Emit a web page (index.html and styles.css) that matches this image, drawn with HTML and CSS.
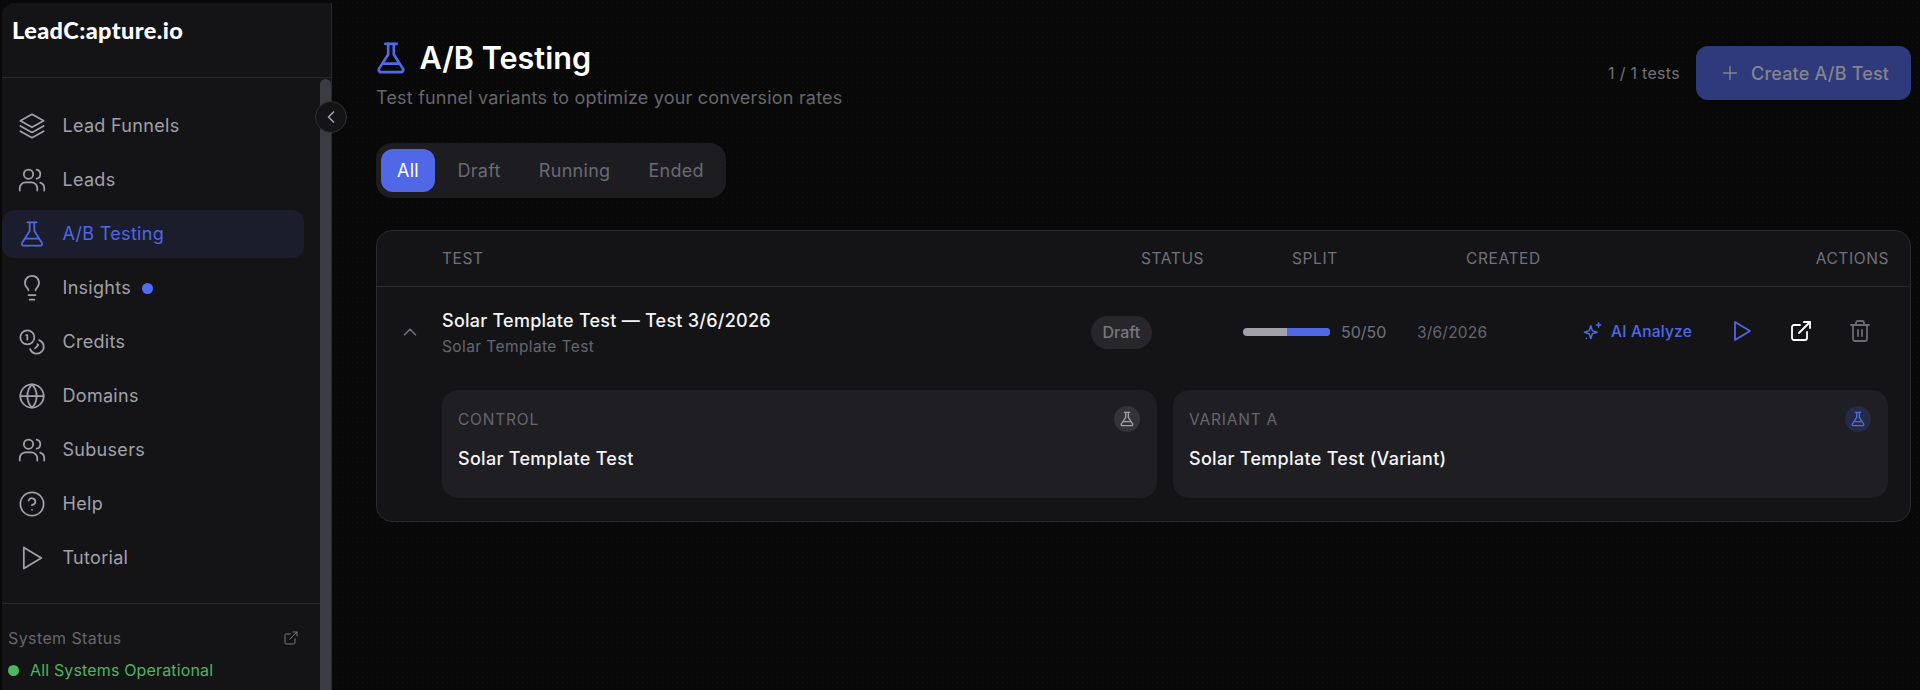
FILE: index.html
```html
<!DOCTYPE html>
<html lang="en">
  <head>
    <meta charset="UTF-8" />
    <title>A/B Testing</title>
    <link rel="stylesheet" href="styles.css">
  </head>
  <body>
    <div class="app">
      <!-- Sidebar -->
      <aside class="sidebar">
        <div class="logo"><span>LeadC:apture.io</span></div>
        <div class="side-body">
          <div class="side-main">
            <nav class="nav">
              <a class="nav-item">
                <svg class="nav-icon" viewBox="0 0 24 24"><path d="M12 2 2 7.5 12 13l10-5.5z"/><path d="m2 12 10 5.5L22 12"/><path d="m2 16.5 10 5.5 10-5.5"/></svg>
                Lead Funnels
              </a>
              <a class="nav-item">
                <svg class="nav-icon" viewBox="0 0 24 24"><circle cx="9" cy="7" r="4"/><path d="M1.5 21v-2a5 5 0 0 1 5-5h5a5 5 0 0 1 5 5v2"/><path d="M16 3.100a4 4 0 0 1 0 7.800"/><path d="M22.500 21v-2a5 5 0 0 0-3.500-4.800"/></svg>
                Leads
              </a>
              <a class="nav-item active">
                <svg class="nav-icon" viewBox="0 0 24 24"><path d="M8 2h8"/><path d="M10 2v7.500L3.600 19.500A1.600 1.600 0 0 0 5 22h14a1.600 1.600 0 0 0 1.400-2.500L14 9.500V2"/><path d="M6.500 16h11"/></svg>
                A/B Testing
              </a>
              <a class="nav-item">
                <svg class="nav-icon" viewBox="0 0 24 24"><path d="M15 14c.2-1 .7-1.700 1.500-2.500A6 6 0 1 0 6 8c0 1 .2 2.200 1.500 3.500.7.700 1.300 1.500 1.500 2.500"/><path d="M9 18h6"/><path d="M10 22h4"/></svg>
                Insights
                <span class="nav-dot"></span>
              </a>
              <a class="nav-item">
                <svg class="nav-icon" viewBox="0 0 24 24"><circle cx="8" cy="8" r="6"/><path d="M18.100 10.400a6 6 0 1 1-7.700 7.700"/><path d="M7 6h1v4"/><path d="m16.700 13.900.7.700-2.800 2.800"/></svg>
                Credits
              </a>
              <a class="nav-item">
                <svg class="nav-icon" viewBox="0 0 24 24"><circle cx="12" cy="12" r="10"/><path d="M12 2a14.500 14.500 0 0 0 0 20 14.500 14.500 0 0 0 0-20"/><path d="M2 12h20"/></svg>
                Domains
              </a>
              <a class="nav-item">
                <svg class="nav-icon" viewBox="0 0 24 24"><circle cx="9" cy="7" r="4"/><path d="M1.500 21v-2a5 5 0 0 1 5-5h5a5 5 0 0 1 5 5v2"/><path d="M16 3.100a4 4 0 0 1 0 7.800"/><path d="M22.500 21v-2a5 5 0 0 0-3.500-4.800"/></svg>
                Subusers
              </a>
              <a class="nav-item">
                <svg class="nav-icon" viewBox="0 0 24 24"><circle cx="12" cy="12" r="10"/><path d="M9.100 9a3 3 0 0 1 5.800 1c0 2-3 3-3 3"/><path d="M12 17h.01"/></svg>
                Help
              </a>
              <a class="nav-item">
                <svg class="nav-icon" viewBox="0 0 24 24"><path d="M5 3v18l15-9z"/></svg>
                Tutorial
              </a>
            </nav>
            <div class="status">
              <div class="status-top">
                <span>System Status</span>
                <svg class="status-link" viewBox="0 0 24 24"><path d="M15 3h6v6"/><path d="M10 14 21 3"/><path d="M18 13v6a2 2 0 0 1-2 2H5a2 2 0 0 1-2-2V8a2 2 0 0 1 2-2h6"/></svg>
              </div>
              <div class="status-ok"><span class="ok-dot"></span>All Systems Operational</div>
            </div>
          </div>
          <div class="scrollbar"></div>
        </div>
        <button class="collapse">
          <svg viewBox="0 0 24 24"><path d="m15 18-6-6 6-6"/></svg>
        </button>
      </aside>

      <!-- Main content -->
      <main class="main">
        <header class="page-head">
          <div>
            <h1 class="page-title">
              <svg class="title-icon" viewBox="0 0 24 24"><path d="M8 2h8"/><path d="M10 2v7.500L3.600 19.500A1.600 1.600 0 0 0 5 22h14a1.600 1.600 0 0 0 1.400-2.500L14 9.500V2"/><path d="M6.500 16h11"/></svg>
              A/B Testing
            </h1>
            <p class="page-sub">Test funnel variants to optimize your conversion rates</p>
          </div>
          <div class="head-right">
            <span class="count">1 / 1 tests</span>
            <button class="create-btn">
              <svg viewBox="0 0 24 24"><path d="M5 12h14"/><path d="M12 5v14"/></svg>
              Create A/B Test
            </button>
          </div>
        </header>

        <div class="tabs">
          <span class="tab selected">All</span>
          <span class="tab">Draft</span>
          <span class="tab">Running</span>
          <span class="tab">Ended</span>
        </div>

        <section class="card">
          <div class="head-row">
            <span></span>
            <span>Test</span>
            <span>Status</span>
            <span>Split</span>
            <span>Created</span>
            <span class="c-actions">Actions</span>
          </div>

          <div class="test-row">
            <svg class="chevron" viewBox="0 0 24 24"><path d="m18 15-6-6-6 6"/></svg>
            <div>
              <div class="test-name">Solar Template Test — Test 3/6/2026</div>
              <div class="test-sub">Solar Template Test</div>
            </div>
            <div><span class="badge">Draft</span></div>
            <div class="split">
              <div class="split-bar"><div class="split-fill"></div></div>
              <span>50/50</span>
            </div>
            <div class="date">3/6/2026</div>
            <div class="actions">
              <span class="analyze">
                <svg viewBox="0 0 24 24"><path d="M10 5.500 11.800 11l5.400 1.800-5.400 1.800L10 20l-1.800-5.400L2.800 12.800 8.200 11z"/><path d="M19 2v5"/><path d="M16.500 4.500h5"/><path d="M5 20h.01"/></svg>
                AI Analyze
              </span>
              <svg class="act blue" viewBox="0 0 24 24"><path d="M5 3v18l15-9z"/></svg>
              <svg class="act white" viewBox="0 0 24 24"><path d="M15 3h6v6"/><path d="M10 14 21 3"/><path d="M18 13v6a2 2 0 0 1-2 2H5a2 2 0 0 1-2-2V8a2 2 0 0 1 2-2h6"/></svg>
              <svg class="act grey" viewBox="0 0 24 24"><path d="M3 6h18"/><path d="M19 6v14a2 2 0 0 1-2 2H7a2 2 0 0 1-2-2V6"/><path d="M8 6V4a2 2 0 0 1 2-2h4a2 2 0 0 1 2 2v2"/><path d="M10 11v6"/><path d="M14 11v6"/></svg>
            </div>
          </div>

          <div class="variants">
            <div class="variant">
              <div class="variant-top">
                <span class="variant-label">Control</span>
                <span class="flask-chip">
                  <svg viewBox="0 0 24 24"><path d="M8 2h8"/><path d="M10 2v7.500L3.600 19.500A1.600 1.600 0 0 0 5 22h14a1.600 1.600 0 0 0 1.400-2.500L14 9.500V2"/><path d="M6.500 16h11"/></svg>
                </span>
              </div>
              <div class="variant-name">Solar Template Test</div>
            </div>
            <div class="variant">
              <div class="variant-top">
                <span class="variant-label">Variant A</span>
                <span class="flask-chip blue-chip">
                  <svg viewBox="0 0 24 24"><path d="M8 2h8"/><path d="M10 2v7.500L3.600 19.500A1.600 1.600 0 0 0 5 22h14a1.600 1.600 0 0 0 1.400-2.500L14 9.500V2"/><path d="M6.500 16h11"/></svg>
                </span>
              </div>
              <div class="variant-name">Solar Template Test (Variant)</div>
            </div>
          </div>
        </section>
      </main>
    </div>
  </body>
</html>
```

FILE: styles.css
```css
* {
  box-sizing: border-box;
}
html,
body {
  margin: 0;
  height: 100%;
  overflow: hidden;
}
body {
  background-color: #080809;
  background-image: radial-gradient(#101012 0.6px, transparent 0.8px);
  background-size: 5px 5px;
  color: #fff;
  font-family: Inter, "Liberation Sans", sans-serif;
}
svg {
  fill: none;
  stroke: currentColor;
  stroke-width: 2;
  stroke-linecap: round;
  stroke-linejoin: round;
  flex-shrink: 0;
}
.app {
  display: flex;
  height: 690px;
  padding: 3px 0 0 2px;
}

/* Sidebar */
.sidebar {
  position: relative;
  width: 330px;
  flex-shrink: 0;
  display: flex;
  flex-direction: column;
  background-color: #141417;
  border-right: 1px solid #2a2a2e;
  border-top-left-radius: 12px;
}
.logo {
  height: 75px;
  flex-shrink: 0;
  padding: 13px 0 0 10px;
  border-bottom: 1px solid #2a2a2e;
  font-family: Lato, sans-serif;
  font-size: 23.500px;
  font-weight: 900;
  line-height: 28px;
  letter-spacing: 0.4px;
}
.side-body {
  flex: 1;
  display: flex;
  min-height: 0;
}
.side-main {
  flex: 1;
  display: flex;
  flex-direction: column;
  min-width: 0;
}
.nav {
  flex: 1;
  display: flex;
  flex-direction: column;
  gap: 6px;
  padding: 24px 16px 0 0;
}
.nav-item {
  display: flex;
  align-items: center;
  gap: 16.500px;
  height: 48px;
  padding-left: 16px;
  border-radius: 12px;
  color: #a1a1aa;
  font-size: 18px;
  line-height: 24px;
  letter-spacing: 0.3px;
}
.nav-icon {
  width: 28px;
  height: 28px;
  stroke-width: 1.500;
}
.nav-item.active {
  background-color: #1b1d2d;
  color: #5068e4;
}
.nav-dot {
  width: 11px;
  height: 11px;
  border-radius: 50%;
  background-color: #4f6ef0;
  margin-left: -6px;
}
.status {
  height: 87px;
  flex-shrink: 0;
  padding: 23px 0 0 6px;
  border-top: 1px solid #2a2a2e;
}
.status-top {
  display: flex;
  align-items: center;
  justify-content: space-between;
  padding-right: 21px;
  color: #66666e;
  font-size: 16px;
  line-height: 22px;
  letter-spacing: 0.4px;
}
.status-link {
  width: 16px;
  height: 16px;
  stroke-width: 1.500;
  color: #77777f;
}
.status-ok {
  display: flex;
  align-items: center;
  gap: 11px;
  margin-top: 10px;
  color: #4db45f;
  font-size: 16px;
  line-height: 22px;
  letter-spacing: 0.15px;
}
.ok-dot {
  width: 11px;
  height: 11px;
  border-radius: 50%;
  background-color: #4fb85f;
}
.scrollbar {
  width: 11px;
  flex-shrink: 0;
  background-color: #3b3b42;
  border-radius: 6px 6px 0 0;
  margin-top: 1px;
}
.collapse {
  position: absolute;
  top: 98px;
  right: -16px;
  width: 32px;
  height: 32px;
  padding: 0;
  display: flex;
  align-items: center;
  justify-content: center;
  border-radius: 50%;
  border: 1px solid #2f2f34;
  background-color: #141417;
  color: #a1a1aa;
}
.collapse svg {
  width: 20px;
  height: 20px;
}

/* Main */
.main {
  flex: 1;
  min-width: 0;
  padding: 0 9px 0 44px;
}
.page-head {
  display: flex;
  justify-content: space-between;
  align-items: flex-start;
  padding-top: 35px;
}
.page-title {
  display: flex;
  align-items: center;
  gap: 11.500px;
  margin: 0 0 0 -2px;
  font-size: 30.600px;
  font-weight: 600;
  line-height: 40px;
}
.title-icon {
  width: 34px;
  height: 34px;
  color: #4f6ae6;
  stroke-width: 1.900;
}
.page-sub {
  margin: 8px 0 0;
  color: #66666e;
  font-size: 18px;
  line-height: 24px;
  letter-spacing: 0.2px;
}
.head-right {
  display: flex;
  align-items: center;
  gap: 16px;
  padding-top: 8px;
}
.count {
  color: #71717a;
  font-size: 16px;
  letter-spacing: 0.3px;
}
.create-btn {
  display: flex;
  align-items: center;
  gap: 10px;
  width: 215px;
  height: 54px;
  padding: 0 0 0 23px;
  border: none;
  border-radius: 12px;
  background-color: #2e3a7b;
  color: #85858c;
  font-family: inherit;
  font-size: 18px;
  font-weight: 500;
  letter-spacing: 0.2px;
}
.create-btn svg {
  width: 22px;
  height: 22px;
  stroke-width: 1.500;
}
.tabs {
  display: inline-flex;
  height: 55px;
  margin-top: 33px;
  padding: 6px 3px 6px 5px;
  border-radius: 16px;
  background-color: #1c1c21;
}
.tab {
  display: flex;
  align-items: center;
  justify-content: center;
  height: 43px;
  padding: 0 19px;
  border-radius: 12px;
  color: #6a6a72;
  font-size: 18px;
  letter-spacing: 0.3px;
}
.tab.selected {
  width: 54px;
  padding: 0;
  margin-right: 3.500px;
  background-color: #5068e6;
  color: #fff;
}

/* Test table */
.card {
  height: 292px;
  margin-top: 32px;
  border: 1px solid #2a2a2e;
  border-radius: 16px;
  background-color: #141417;
}
.head-row {
  display: grid;
  grid-template-columns: 65px 699px 151px 174px auto 1fr;
  align-items: center;
  height: 56px;
  border-bottom: 1px solid #2a2a2e;
  color: #71717a;
  font-size: 15.500px;
  letter-spacing: 0.6px;
  text-transform: uppercase;
}
.c-actions {
  text-align: right;
  padding-right: 21px;
}
.test-row {
  display: grid;
  grid-template-columns: 65px 649px 152px 174px auto 1fr;
  align-items: center;
  height: 103px;
  padding-bottom: 12px;
}
.chevron {
  width: 22px;
  height: 22px;
  margin-left: 22px;
  margin-top: -2px;
  color: #71717a;
  stroke-width: 1.800;
}
.test-name {
  font-size: 18px;
  font-weight: 450;
  line-height: 24px;
  letter-spacing: 0.25px;
  color: #f4f4f5;
}
.test-sub {
  margin-top: 4px;
  color: #66666e;
  font-size: 15.500px;
  line-height: 20px;
  letter-spacing: 0.4px;
}
.badge {
  display: inline-block;
  height: 33px;
  padding: 0 11.500px;
  border-radius: 17px;
  background-color: #27272b;
  color: #77777f;
  font-size: 16px;
  font-weight: 500;
  line-height: 33px;
}
.split {
  display: flex;
  align-items: center;
  gap: 11px;
  margin-bottom: 2px;
  color: #71717a;
  font-size: 16px;
}
.split-bar {
  width: 87px;
  height: 8px;
  border-radius: 4px;
  overflow: hidden;
  background-color: #a1a1aa;
}
.split-fill {
  width: 50%;
  height: 100%;
  margin-left: 50%;
  background-color: #5068e6;
}
.date {
  color: #66666e;
  font-size: 15.500px;
  letter-spacing: 0.2px;
}
.actions {
  display: flex;
  align-items: center;
  justify-content: flex-end;
  gap: 35px;
  margin-bottom: 3px;
  padding-right: 38px;
}
.analyze {
  display: flex;
  align-items: center;
  gap: 8px;
  color: #5068e6;
  font-size: 15.500px;
  font-weight: 500;
  letter-spacing: 0.2px;
  margin-right: 3px;
}
.analyze svg {
  width: 21px;
  height: 21px;
  stroke-width: 1.700;
}
.act {
  width: 24px;
  height: 24px;
  stroke-width: 1.800;
}
.act.blue {
  color: #5068e6;
}
.act.white {
  color: #fff;
}
.act.grey {
  color: #6a6a72;
}
.variants {
  display: grid;
  grid-template-columns: 1fr 1fr;
  gap: 16px;
  padding: 0 22px 0 65px;
}
.variant {
  height: 108px;
  padding: 16px 17px 0 16px;
  border-radius: 16px;
  background-color: #1e1e23;
}
.variant-top {
  display: flex;
  justify-content: space-between;
  align-items: center;
  height: 26px;
}
.variant-label {
  color: #66666e;
  font-size: 15.500px;
  letter-spacing: 0.8px;
  text-transform: uppercase;
}
.variant-name {
  margin-top: 15px;
  color: #f4f4f5;
  font-size: 18px;
  font-weight: 450;
  line-height: 24px;
  letter-spacing: 0.3px;
}
.flask-chip {
  display: flex;
  align-items: center;
  justify-content: center;
  width: 26px;
  height: 26px;
  border-radius: 50%;
  background-color: #333338;
  color: #a1a1aa;
}
.flask-chip svg {
  width: 16px;
  height: 16px;
}
.blue-chip {
  background-color: #242a48;
  color: #4f6ae6;
}
```
